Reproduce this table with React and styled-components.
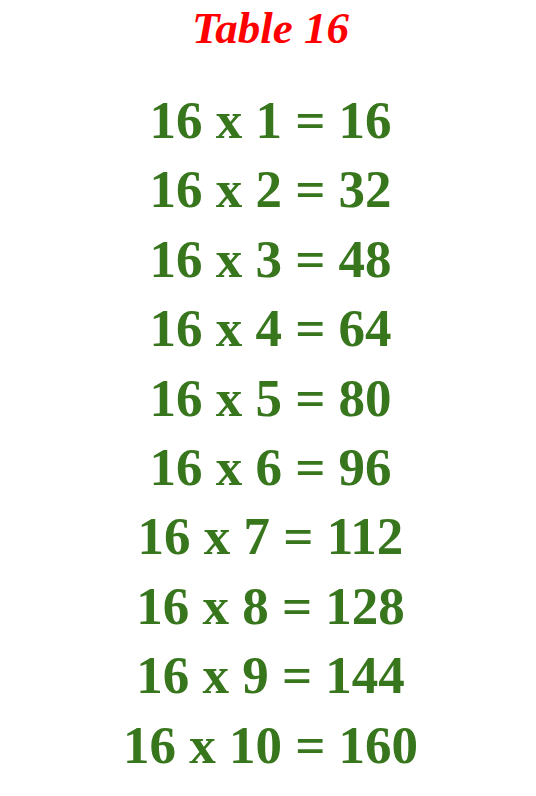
import React from "react";
import styled, { createGlobalStyle } from "styled-components";

const GlobalStyle = createGlobalStyle`
    html, body {
        margin: 0;
        padding: 0;
        background: #ffffff;
    }
    body {
        font-family: "Liberation Serif", "Times New Roman", serif;
    }
`;

const Page = styled.div`
    display: flex;
    flex-direction: column;
    align-items: center;
    padding-left: 5px;
`;

const Title = styled.h1`
    margin: 0;
    font-size: 45px;
    line-height: 56px;
    font-style: italic;
    font-weight: bold;
    color: #ff0000;
`;

const List = styled.div`
    display: flex;
    flex-direction: column;
    align-items: center;
    margin-top: 30px;
`;

const Row = styled.div`
    font-size: 53px;
    line-height: 69.4px;
    font-weight: bold;
    color: #38761d;
    white-space: nowrap;
`;

const n = 16;

export default function App() {
    const rows = Array.from({ length: 10 }, (_, i) => i + 1);

    return (
        <>
            <GlobalStyle />
            <Page>
                <Title>Table {n}</Title>
                <List>
                    {rows.map((m) => (
                        <Row key={m}>
                            {n} x {m} = {n * m}
                        </Row>
                    ))}
                </List>
            </Page>
        </>
    );
}
